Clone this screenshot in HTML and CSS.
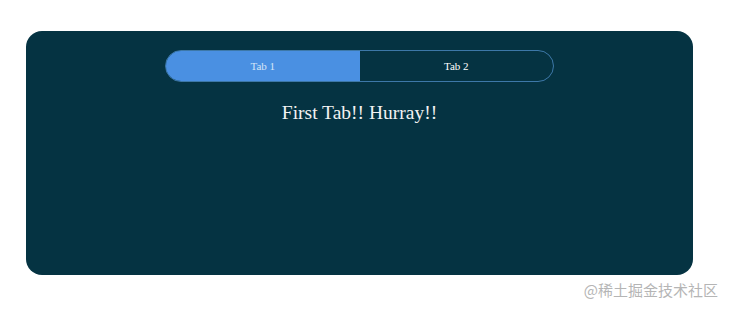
FILE: index.html
```html
<!DOCTYPE html>
<html lang="en">
<head>
  <meta charset="UTF-8">
  <title>Tabs</title>
  <link rel="stylesheet" href="styles.css">
</head>
<body>
  <!-- Caja de pestañas -->
  <div class="page">
    <div class="tabs-box">
      <div class="tab-bar">
        <button class="tab active">Tab 1</button>
        <button class="tab">Tab 2</button>
      </div>
      <div class="tab-content">
        <p>First Tab!! Hurray!!</p>
      </div>
    </div>
    <div class="watermark">@稀土掘金技术社区</div>
  </div>
</body>
</html>
```

FILE: styles.css
```css
body {
  margin: 0;
  padding: 0;
  background: #fff;
  font-family: "Liberation Serif", serif;
}

.page {
  width: 730px;
  height: 310px;
  padding: 31px 0 0 26px;
  box-sizing: border-box;
  position: relative;
}

.tabs-box {
  width: 667px;
  height: 244px;
  background: #053342;
  border-radius: 16px;
  box-sizing: border-box;
  padding-top: 19px;
  display: flex;
  flex-direction: column;
  align-items: center;
}

.tab-bar {
  display: flex;
  width: 389px;
  height: 32px;
  border: 1px solid #3d78a8;
  border-radius: 16px;
  overflow: hidden;
  box-sizing: border-box;
}

.tab {
  flex: 1;
  border: none;
  background: transparent;
  color: #ffffff;
  font-family: "Liberation Serif", serif;
  font-size: 11px;
  cursor: pointer;
}

.tab.active {
  background: #4a90e2;
  color: #d6e6f7;
}

.tab-content p {
  margin: 20px 0 0;
  color: #f2f2f2;
  font-size: 19.5px;
  text-align: center;
}

.watermark {
  position: absolute;
  right: 12px;
  top: 279px;
  color: #b5b5b5;
  font-size: 15px;
  font-family: "Noto Sans CJK SC", sans-serif;
}
```
